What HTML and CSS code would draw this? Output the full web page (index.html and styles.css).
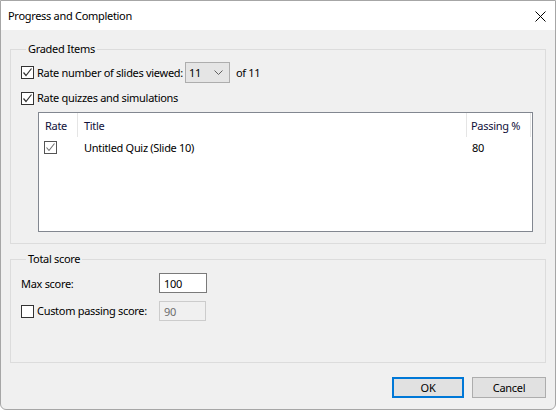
FILE: index.html
```html
<!DOCTYPE html>
<html>
<head>
<meta charset="utf-8">
<link rel="stylesheet" href="styles.css">
</head>
<body>
<div class="window">
  <div class="titlebar">
    <span class="title">Progress and Completion</span>
    <svg class="close" width="11" height="11" viewBox="0 0 11 11"><path d="M0.5 0.5 L10.5 10.5 M10.5 0.5 L0.5 10.5" stroke="#000" stroke-width="1" fill="none"/></svg>
  </div>
  <div class="body">
    <fieldset class="group group-graded">
      <legend>Graded Items</legend>
      <div class="row row-slides">
        <span class="cb"><svg width="11" height="11" viewBox="0 0 11 11"><path d="M1.5 5.5 L4 8.5 L9.5 1.5" stroke="#333" stroke-width="1.2" fill="none"/></svg></span>
        <span class="cb-label">Rate number of slides viewed:</span>
        <span class="select"><span class="select-val">11</span><svg class="chev" width="9" height="5" viewBox="0 0 9 5"><path d="M0.5 0.5 L4.5 4.5 L8.5 0.5" stroke="#606060" stroke-width="1" fill="none"/></svg></span>
        <span class="of">of 11</span>
      </div>
      <div class="row row-quiz">
        <span class="cb"><svg width="11" height="11" viewBox="0 0 11 11"><path d="M1.5 5.5 L4 8.5 L9.5 1.5" stroke="#333" stroke-width="1.2" fill="none"/></svg></span>
        <span class="cb-label">Rate quizzes and simulations</span>
      </div>
      <div class="list">
        <div class="list-head">
          <div class="col c1 h">Rate</div>
          <div class="col c2 h">Title</div>
          <div class="col c3 h">Passing %</div>
        </div>
        <div class="list-row">
          <div class="col c1 r"><span class="cb cb-list"><svg width="11" height="11" viewBox="0 0 11 11"><path d="M1.5 5.5 L4 8.5 L9.5 1.5" stroke="#707070" stroke-width="1.1" fill="none"/></svg></span></div>
          <div class="col c2 r">Untitled Quiz (Slide 10)</div>
          <div class="col c3 r r3">80</div>
        </div>
      </div>
    </fieldset>
    <fieldset class="group group-total">
      <legend>Total score</legend>
      <div class="row row-max">
        <span class="field-label">Max score:</span>
        <span class="input">100</span>
      </div>
      <div class="row row-custom">
        <span class="cb"></span>
        <span class="cb-label custom-label">Custom passing score:</span>
        <span class="input disabled">90</span>
      </div>
    </fieldset>
    <div class="buttons">
      <div class="btn btn-ok">OK</div>
      <div class="btn btn-cancel">Cancel</div>
    </div>
  </div>
</div>
</body>
</html>
```

FILE: styles.css
```css
html, body {
  margin: 0;
  padding: 0;
  background: #ffffff;
}
body {
  font-family: "Noto Sans", "Open Sans", sans-serif;
  font-size: 11px;
  letter-spacing: -0.3px;
  color: #000;
}
.window {
  width: 556px;
  height: 410px;
  box-sizing: border-box;
  border: 1px solid #a6a6a6;
  border-radius: 0 0 6px 6px;
  background: #f0f0f0;
  display: flex;
  flex-direction: column;
  overflow: hidden;
}
.titlebar {
  height: 29px;
  background: #ffffff;
  display: flex;
  align-items: center;
  padding-left: 7px;
  padding-right: 9px;
  flex-shrink: 0;
}
.title {
  flex: 1;
  line-height: 16px;
  margin-top: 1px;
}
.close {
  display: block;
  margin-top: 1px;
}
.body {
  display: flex;
  flex-direction: column;
  padding: 0 9px;
}
.group {
  margin: 0;
  border: 1px solid #dcdcdc;
  padding: 0 12px 0 10px;
  min-width: 0;
}
.group legend {
  padding: 0 2px;
  margin-left: 5px;
  line-height: 16px;
}
.group-graded {
  margin-top: 11px;
  padding-top: 5px;
  padding-bottom: 11px;
}
.group-total {
  margin-top: 7px;
  padding-top: 6px;
  padding-bottom: 41px;
}
.row {
  display: flex;
  align-items: center;
}
.row-slides {
  height: 21px;
}
.row-quiz {
  height: 16px;
  margin-top: 7px;
}
.cb {
  width: 13px;
  height: 13px;
  box-sizing: border-box;
  border: 1px solid #333333;
  background: #ffffff;
  display: inline-flex;
  align-items: center;
  justify-content: center;
  flex-shrink: 0;
}
.cb svg {
  display: block;
}
.cb-list {
  border-color: #555555;
}
.cb-label {
  margin-left: 3px;
  line-height: 16px;
  white-space: nowrap;
}
.select {
  margin-left: 2px;
  width: 45px;
  height: 21px;
  box-sizing: border-box;
  border: 1px solid #adadad;
  background: #e5e5e5;
  display: flex;
  align-items: center;
  justify-content: space-between;
  padding: 0 6px 0 3px;
}
.chev {
  display: block;
}
.of {
  margin-left: 6px;
}
.list {
  margin-top: 6px;
  margin-left: 17px;
  height: 120px;
  box-sizing: border-box;
  border: 1px solid #828790;
  background: #ffffff;
}
.list-head, .list-row {
  display: flex;
}
.list-head {
  height: 24px;
}
.list-row {
  height: 20px;
}
.col {
  box-sizing: border-box;
  display: flex;
  align-items: center;
  white-space: nowrap;
}
.c1 { width: 39px; padding-left: 6px; }
.c2 { width: 389px; padding-left: 6px; }
.c3 { width: 64px; padding-left: 4px; }
.h {
  border-right: 1px solid #e5e5e5;
  color: #10103a;
}
.r.c1 { padding-left: 5px; }
.r3 { padding-left: 5px; }
.list-head .col {
  padding-top: 1px;
}
.row-max {
  height: 20px;
}
.row-custom {
  height: 20px;
  margin-top: 8px;
}
.field-label {
  width: 138px;
}
.input {
  width: 48px;
  height: 20px;
  box-sizing: border-box;
  border: 1px solid #7a7a7a;
  background: #ffffff;
  display: flex;
  align-items: center;
  padding-left: 4px;
}
.input.disabled {
  width: 47px;
  border-color: #cccccc;
  background: #f0f0f0;
  color: #6d6d6d;
}
.custom-label {
  width: 122px;
}
.buttons {
  display: flex;
  justify-content: flex-end;
  gap: 8px;
  margin-top: 14px;
}
.btn {
  height: 21px;
  box-sizing: border-box;
  background: #e1e1e1;
  display: flex;
  align-items: center;
  justify-content: center;
}
.btn-ok {
  width: 72px;
  border: 2px solid #0078d7;
}
.btn-cancel {
  width: 74px;
  border: 1px solid #adadad;
}
```
